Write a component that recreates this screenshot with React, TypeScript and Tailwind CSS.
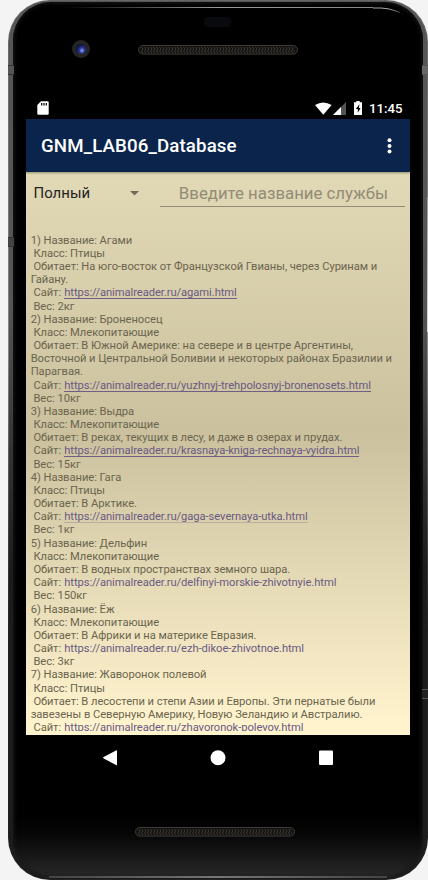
import React from "react";

type Animal = { name: string; kind: string; habitat: string[]; url: string; weight: string; line: string };

const STRONG = "border-[#6f5f86]";
const FAINT = "border-[#6f5f86]/30";
const NONE = "border-transparent";

const animals: Animal[] = [
  { name: "Агами", kind: "Птицы", habitat: ["На юго-восток от Французской Гвианы, через Суринам и", "Гайану."], url: "https://animalreader.ru/agami.html", weight: "2кг", line: STRONG },
  { name: "Броненосец", kind: "Млекопитающие", habitat: ["В Южной Америке: на севере и в центре Аргентины,", "Восточной и Центральной Боливии и некоторых районах Бразилии и", "Парагвая."], url: "https://animalreader.ru/yuzhnyj-trehpolosnyj-bronenosets.html", weight: "10кг", line: STRONG },
  { name: "Выдра", kind: "Млекопитающие", habitat: ["В реках, текущих в лесу, и даже в озерах и прудах."], url: "https://animalreader.ru/krasnaya-kniga-rechnaya-vyidra.html", weight: "15кг", line: STRONG },
  { name: "Гага", kind: "Птицы", habitat: ["В Арктике."], url: "https://animalreader.ru/gaga-severnaya-utka.html", weight: "1кг", line: FAINT },
  { name: "Дельфин", kind: "Млекопитающие", habitat: ["В водных пространствах земного шара."], url: "https://animalreader.ru/delfinyi-morskie-zhivotnyie.html", weight: "150кг", line: NONE },
  { name: "Ёж", kind: "Млекопитающие", habitat: ["В Африки и на материке Евразия."], url: "https://animalreader.ru/ezh-dikoe-zhivotnoe.html", weight: "3кг", line: NONE },
  { name: "Жаворонок полевой", kind: "Птицы", habitat: ["В лесостепи и степи Азии и Европы. Эти пернатые были", "завезены в Северную Америку, Новую Зеландию и Австралию."], url: "https://animalreader.ru/zhavoronok-polevoy.html", weight: "", line: NONE },
];

function Speaker({ id }: { id: string }) {
  return (
    <svg width="160" height="10" viewBox="0 0 160 10" className="block">
      <defs>
        <pattern id={id} width="3" height="10" patternUnits="userSpaceOnUse">
          <path d="M.5 2 L2 4 L.5 6 L2 8" stroke="#484440" strokeWidth=".8" fill="none" />
        </pattern>
      </defs>
      <rect x=".5" y=".5" width="159" height="8.6" rx="4.3" fill="#14120f" stroke="#4c4945" strokeWidth=".8" />
      <rect x="3" y="1" width="154" height="8" fill={`url(#${id})`} />
    </svg>
  );
}

function StatusBar() {
  return (
    <div className="flex h-[24px] shrink-0 items-center pt-[2px] pr-[7.5px] pl-[11px] text-white">
      <svg width="12" height="14" viewBox="0 0 12 14">
        <path d="M4 .2H10.5Q11.7 .2 11.7 1.4V12.6Q11.7 13.8 10.5 13.8H1.5Q.3 13.8 .3 12.6V4Z" fill="#fff" />
        <path d="M4.7 2v2.4M7 2v2.4M9.3 2v2.4" stroke="#000" strokeWidth="1.2" />
      </svg>
      <div className="flex-1" />
      <svg width="17" height="13" viewBox="0 0 17 13" className="mr-[1.5px]">
        <path d="M0 3Q8.3-2.2 16.6 3L8.3 12.8Z" fill="#fff" />
      </svg>
      <svg width="13" height="13" viewBox="0 0 13 13" className="mr-2">
        <path d="M13 0V13H0Z" fill="#555" />
        <path d="M8 5V13H0Z" fill="#fff" />
      </svg>
      <svg width="8" height="14" viewBox="0 0 8 14" className="mr-[7px]">
        <path d="M2.3 0H5.7V1.2H8V14H0V1.2H2.3Z" fill="#fff" />
        <path d="M5.5 3.2L1.8 8H3.8V11.8L6.6 7H4.8Z" fill="#000" />
      </svg>
      <span className="pt-px text-[13.2px] leading-[14px] font-medium">11:45</span>
    </div>
  );
}

function AppBar() {
  return (
    <header className="relative flex h-[53px] shrink-0 items-center justify-between bg-[#0b244b] pr-[18px] pl-[15px] text-white shadow-[0_1px_2px_rgba(60,50,20,0.45)]">
      <h1 className="pt-[2px] text-[18.7px] leading-none font-medium tracking-[0.12px]">GNM_LAB06_Database</h1>
      <svg width="5" height="16" viewBox="0 0 5 16">
        <circle cx="2.5" cy="2.3" r="2" fill="#fff" />
        <circle cx="2.5" cy="7.9" r="2" fill="#fff" />
        <circle cx="2.5" cy="13.5" r="2" fill="#fff" />
      </svg>
    </header>
  );
}

function Filters() {
  return (
    <div className="flex h-[35px] shrink-0 items-end">
      <div className="flex h-full w-[134px] items-center justify-between pt-[8px] pr-[21px] pl-[7.5px]">
        <span className="text-[14.9px] leading-none tracking-[0.05px] text-[#25231d]">Полный</span>
        <svg width="9" height="5" viewBox="0 0 9 5">
          <path d="M0 0H9L4.5 4.6Z" fill="#726d58" />
        </svg>
      </div>
      <div className="flex h-[28px] w-[245px] items-center justify-center border-b border-[#938c74] pt-[2px] pl-[2px] text-[16.8px] leading-none whitespace-nowrap text-[#928c76]">
        Введите название службы
      </div>
    </div>
  );
}

function Entry({ animal, index }: { animal: Animal; index: number }) {
  return (
    <li>
      <p>{index}) Название: {animal.name}</p>
      <p>{" "}Класс: {animal.kind}</p>
      {animal.habitat.map((row, i) => (
        <p key={row}>{i === 0 ? " Обитает: " : ""}{row}</p>
      ))}
      <p className="flex">
        <span>{" Сайт: "}</span>
        <a className={`h-[13px] border-b pl-[0.4px] tracking-[-0.065px] text-[#6a5a84] ${animal.line}`}>{animal.url}</a>
      </p>
      {animal.weight && <p>{" Вес: "}{animal.weight}</p>}
    </li>
  );
}

export default function App() {
  return (
    <div className="h-[880px] w-[428px] overflow-hidden bg-[#f4f4f4] pl-2 font-[Roboto,sans-serif]">
      <div className="relative h-[880px] w-[420px] rounded-[42px] bg-linear-to-b from-[#666] via-[#888] via-40% to-[#222] to-72% p-[1px]">
        <div className="h-full rounded-[41px] bg-linear-to-b from-[#555] via-[#555] via-35% to-[#1c1c1c] to-65% px-[4px] pt-[1px] pb-[2px]">
          <div className="relative flex h-full flex-col items-start rounded-[38px] bg-linear-to-b from-black from-91% to-[#292929] shadow-[inset_0_0_4px_1px_#191919]">
            <div className="absolute top-[5px] left-[50px] h-px w-[310px] bg-linear-to-r from-transparent via-[#999] to-[#888]" />
            <svg className="absolute top-[5px] right-[16px]" width="34" height="12" viewBox="0 0 34 12">
              <path d="M0 .5H8Q22 1 32.5 9Q22 2.2 8 1.6H0Z" fill="#a5aaaa" />
            </svg>
            <div className="absolute top-[63px] left-[-5px] h-[10px] w-[6px] border-y border-[#333] bg-[#555]" />
            <div className="absolute top-[63px] right-[-5px] h-[10px] w-[6px] border-y border-[#555] bg-[#666]" />
            <div className="absolute top-[235px] left-[-5px] h-[10px] w-[6px] border-y border-[#333] bg-[#444]" />
            <div className="absolute top-[195px] right-[-5px] h-[135px] w-px bg-linear-to-b from-[#999] to-[#ddd]" />
            <div className="absolute top-[687px] right-[-5px] h-[10px] w-[6px] border-y border-[#555] bg-[#222]" />
            <div className="absolute top-[38px] left-[59px] flex size-[18px] items-center justify-center rounded-full bg-[#252525]">
              <div className="size-[10px] rounded-full bg-radial-[at_60%_65%] from-[#99aaff] via-[#2b3999] via-30% to-[#090b25] to-75%" />
            </div>
            <div className="absolute top-[15px] left-[191px] h-[10px] w-[27px] rounded-[4px] bg-[#080a0d]" />
            <div className="mt-[43px] pl-[125px]"><Speaker id="grille-top" /></div>
            <main className="mt-[40px] ml-[13px] flex h-[640px] w-[384px] shrink-0 flex-col bg-black">
              <StatusBar />
              <div className="flex h-[616px] shrink-0 flex-col overflow-hidden bg-linear-to-b from-[#e1d8b5] from-10% via-[#cbc19e] via-51% to-[#fff3ce] to-98%">
                <AppBar />
                <Filters />
                <ol className="mt-[22px] h-[502px] overflow-hidden pt-[4.7px] pl-[4.7px] text-[11.2px] leading-[13.17px] tracking-[-0.048px] whitespace-pre text-[#6b654e]">
                  {animals.map((animal, i) => <Entry key={animal.name} animal={animal} index={i + 1} />)}
                </ol>
              </div>
            </main>
            <nav className="ml-[13px] flex h-[46px] w-[384px] items-center">
              <svg width="384" height="46" viewBox="0 0 384 46">
                <path d="M90.5 15.2Q91 15 91 16V29.5Q91 30.5 90 30L77.7 23.4Q76.5 22.7 77.7 22Z" fill="#fff" />
                <circle cx="192" cy="22.7" r="7.5" fill="#fff" />
                <rect x="293" y="15.5" width="14" height="14.5" rx="1" fill="#fff" />
              </svg>
            </nav>
            <div className="mt-[46px] pl-[122px]"><Speaker id="grille-bottom" /></div>
            <div className="absolute bottom-[-1px] left-[36px] h-[2px] w-[338px] bg-linear-to-r from-[#444] via-[#777] to-[#444]" />
          </div>
        </div>
      </div>
    </div>
  );
}
